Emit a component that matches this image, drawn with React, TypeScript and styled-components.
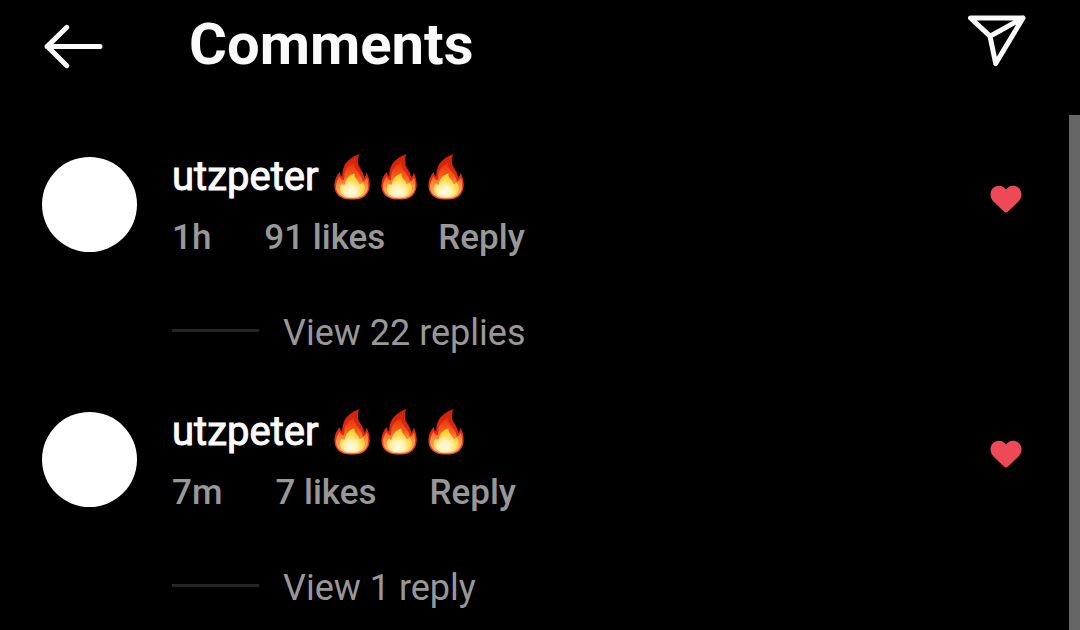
import React, { useId } from 'react';
import styled, { createGlobalStyle } from 'styled-components';

const GlobalStyle = createGlobalStyle`
  *, *::before, *::after { box-sizing: border-box; }
  body { margin: 0; background: #000; font-family: Roboto, 'Liberation Sans', sans-serif; }
`;

const Page = styled.div`
  display: flex;
  flex-direction: column;
  min-height: 100vh;
  background: #000;
  color: #fafafa;
`;

const Header = styled.header`
  display: flex;
  align-items: flex-start;
  height: 115px;
  padding: 10px 52px 0 42px;
`;

const IconButton = styled.button`
  display: flex;
  padding: 0;
  border: 0;
  background: none;
  color: inherit;
  cursor: pointer;
`;

const BackButton = styled(IconButton)`
  margin: 12px 85px 0 0;
`;

const Title = styled.h1`
  flex: 1;
  margin: 0;
  font-size: 58px;
  line-height: 68px;
  font-weight: 700;
`;

const Content = styled.main`
  display: flex;
  flex: 1;
`;

const List = styled.ul`
  display: flex;
  flex: 1;
  flex-direction: column;
  gap: 52px;
  margin: 0;
  padding: 37px 47px 0 42px;
  list-style: none;
`;

const ScrollThumb = styled.div`
  width: 11px;
  background: #666;
`;

const Comment = styled.li`
  display: flex;
  align-items: flex-start;
`;

const Avatar = styled.div`
  width: 95px;
  height: 95px;
  margin: 5px 35px 0 0;
  border-radius: 50%;
  background: #fff;
`;

const Body = styled.div`
  flex: 1;
`;

const Line = styled.p`
  display: flex;
  align-items: center;
  gap: 11px;
  height: 50px;
  margin: 0 0 14px;
`;

const Username = styled.a`
  margin-right: 4px;
  color: inherit;
  font-size: 40px;
  line-height: 48px;
  font-weight: 400;
  -webkit-text-stroke: 1px currentColor;
  text-decoration: none;
`;

const Meta = styled.div`
  display: flex;
  gap: 53px;
  color: #989898;
  font-size: 35px;
  line-height: 44px;
  font-weight: 500;
`;

const TextButton = styled.button`
  padding: 0;
  border: 0;
  background: none;
  color: inherit;
  font: inherit;
  cursor: pointer;
`;

const Replies = styled.div`
  display: flex;
  align-items: center;
  gap: 24px;
  margin-top: 51px;
  color: #989898;
  font-size: 36px;
  line-height: 44px;
`;

const Rule = styled.span`
  width: 87px;
  height: 3px;
  margin-bottom: 5px;
  background: #262626;
`;

const LikeButton = styled(IconButton)`
  margin-top: 33px;
`;

function BackArrow() {
  return (
    <svg width="62" height="48" viewBox="0 0 62 48" fill="none" stroke="currentColor" strokeWidth="5" strokeLinecap="round" strokeLinejoin="round" aria-hidden="true">
      <path d="M58 24.4H5M24.8 5.3L5.3 24.4l19.5 19.3" />
    </svg>
  );
}

function PaperPlane() {
  return (
    <svg width="62" height="62" viewBox="0 0 62 62" fill="none" stroke="currentColor" strokeWidth="5" strokeLinecap="round" strokeLinejoin="round" aria-hidden="true">
      <path d="M4.5 8H57L29.7 53.5L24 26.2zM24 26.2L57 8" />
    </svg>
  );
}

function Heart() {
  return (
    <svg width="32" height="28" viewBox="0 0 32 28" fill="#ed4956" aria-hidden="true">
      <path d="M16 27.5C14.8 27.5 13.5 26 11.5 24.2L4.2 17.3C1.8 15 .5 12.4.5 9.5C.5 4.5 4.2.8 8.8.8C11.8.8 14.4 2.2 16 4.6C17.6 2.2 20.2.8 23.2.8C27.8.8 31.5 4.5 31.5 9.5C31.5 12.4 30.2 15 27.8 17.3L20.5 24.2C18.5 26 17.2 27.5 16 27.5z" />
    </svg>
  );
}

function Fire() {
  const id = useId();
  return (
    <svg width="36" height="46" viewBox="0 0 36 46" role="img" aria-label="fire">
      <defs>
        <linearGradient id={`${id}o`} x1="0" y1="0" x2="0" y2="1">
          <stop offset="0" stopColor="#d42008" />
          <stop offset=".55" stopColor="#e02a10" />
          <stop offset="1" stopColor="#e8502c" />
        </linearGradient>
        <linearGradient id={`${id}m`} x1="0" y1="0" x2="0" y2="1">
          <stop offset="0" stopColor="#e8300e" />
          <stop offset=".35" stopColor="#f45a1c" />
          <stop offset=".6" stopColor="#fb8a3c" />
          <stop offset="1" stopColor="#ffb874" />
        </linearGradient>
        <radialGradient id={`${id}i`} gradientUnits="userSpaceOnUse" cx="17" cy="38" r="19">
          <stop offset="0" stopColor="#fffce0" />
          <stop offset=".35" stopColor="#fff0b4" />
          <stop offset=".6" stopColor="#ffdc50" />
          <stop offset="1" stopColor="#ffc814" />
        </radialGradient>
      </defs>
      <path fill={`url(#${id}o)`} d="M25.3 0C19 2.2 12.4 6.6 9.8 13C8.5 16.3 8.2 19.5 8.2 22.6C6.5 21.8 5.9 20 5.8 17.8C2.4 21.5.4 26.3.4 31.5C.4 40 6.5 45.5 16 45.6H20.5C30 45.5 35.7 39.5 35.7 31C35.7 26.5 34.5 22.5 32.7 18.5C32.4 20.8 31.6 22.5 30.2 24C30.1 18.5 25.2 14.5 24.1 9.5C23.5 6.5 24 3.3 25.3 0z" />
      <path fill={`url(#${id}m)`} d="M20 9C14 12 10.6 16.3 10.4 21.5C10.3 23.5 10.2 25 9.6 26.5C7.4 25.8 6.2 24.5 5.6 22.5C3.2 26 2 29.5 2 32.5C2 39.5 8 44.2 16 44.3H20.5C28.5 44.2 34.2 39 34.2 31.5C34.2 28.8 33.8 26 32.8 23.6C31.8 25.8 30.6 27 28.6 27.8C28.8 23 24.8 19.5 22 15.5C20.4 13 19.8 11.3 20 9z" />
      <path fill={`url(#${id}i)`} d="M20.5 19.5C19.8 23.8 24.2 26 25.6 30C27 30.2 28 29.6 28.7 28.6C30.6 31 31.2 33 30.7 35.6C29.8 40.7 25.4 43.4 18.2 43.5C11 43.4 6.2 40.5 5.8 35.5C5.6 32.8 6.6 30.8 7.8 29.4C8.6 30.4 9.6 30.8 10.8 30.6C11.4 25 15 20.8 20.5 19.5z" />
    </svg>
  );
}

const comments = [
  { id: 1, user: 'utzpeter', age: '1h', likes: '91 likes', replies: 'View 22 replies' },
  { id: 2, user: 'utzpeter', age: '7m', likes: '7 likes', replies: 'View 1 reply' },
];

export default function App() {
  return (
    <>
      <GlobalStyle />
      <Page>
        <Header>
          <BackButton type="button" aria-label="Back"><BackArrow /></BackButton>
          <Title>Comments</Title>
          <IconButton type="button" aria-label="Share"><PaperPlane /></IconButton>
        </Header>
        <Content>
          <List>
            {comments.map((c) => (
              <Comment key={c.id}>
                <Avatar />
                <Body>
                  <Line>
                    <Username href="#">{c.user}</Username>
                    <Fire />
                    <Fire />
                    <Fire />
                  </Line>
                  <Meta>
                    <span>{c.age}</span>
                    <TextButton type="button">{c.likes}</TextButton>
                    <TextButton type="button">Reply</TextButton>
                  </Meta>
                  <Replies>
                    <Rule />
                    <TextButton type="button">{c.replies}</TextButton>
                  </Replies>
                </Body>
                <LikeButton type="button" aria-label="Unlike"><Heart /></LikeButton>
              </Comment>
            ))}
          </List>
          <ScrollThumb />
        </Content>
      </Page>
    </>
  );
}
